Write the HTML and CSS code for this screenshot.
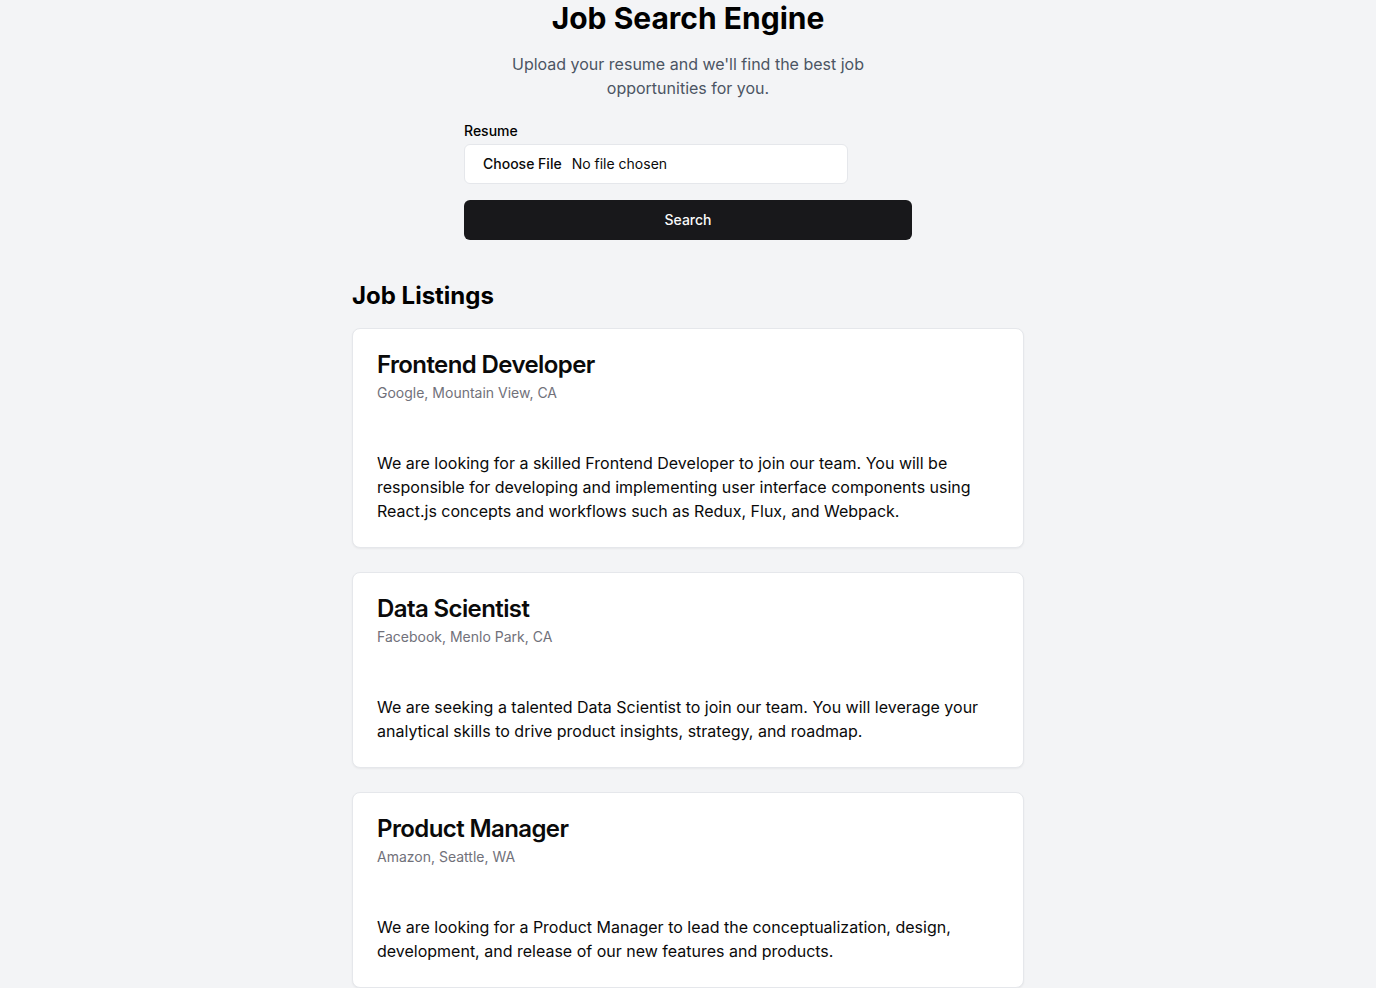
FILE: index.html
```html
<!DOCTYPE html>
<html lang="en">
<head>
<meta charset="utf-8">
<title>Job Search Engine</title>
<link rel="stylesheet" href="styles.css">
</head>
<body>
<main class="page">
  <section class="hero">
    <h1 class="title">Job Search Engine</h1>
    <p class="subtitle">Upload your resume and we'll find the best job opportunities for you.</p>
    <form class="search-form">
      <div class="field">
        <label class="label" for="resume">Resume</label>
        <input class="file-input" id="resume" type="file">
      </div>
      <button class="search-btn" type="button">Search</button>
    </form>
  </section>
  <section class="listings">
    <h2 class="listings-title">Job Listings</h2>
    <div class="cards">
      <article class="card">
        <header class="card-header">
          <h3 class="card-title">Frontend Developer</h3>
          <p class="card-desc">Google, Mountain View, CA</p>
        </header>
        <div class="card-content">
          <p>We are looking for a skilled Frontend Developer to join our team. You will be responsible for developing and implementing user interface components using React.js concepts and workflows such as Redux, Flux, and Webpack.</p>
        </div>
      </article>
      <article class="card">
        <header class="card-header">
          <h3 class="card-title">Data Scientist</h3>
          <p class="card-desc">Facebook, Menlo Park, CA</p>
        </header>
        <div class="card-content">
          <p>We are seeking a talented Data Scientist to join our team. You will leverage your analytical skills to drive product insights, strategy, and roadmap.</p>
        </div>
      </article>
      <article class="card">
        <header class="card-header">
          <h3 class="card-title">Product Manager</h3>
          <p class="card-desc">Amazon, Seattle, WA</p>
        </header>
        <div class="card-content">
          <p>We are looking for a Product Manager to lead the conceptualization, design, development, and release of our new features and products.</p>
        </div>
      </article>
    </div>
  </section>
</main>
</body>
</html>
```
FILE: styles.css
```css
* { box-sizing: border-box; }
html, body {
  margin: 0;
  padding: 0;
  background: #f3f4f6;
  font-family: Inter, "Noto Sans", "Liberation Sans", sans-serif;
  color: #0a0a0a;
}
.page {
  display: flex;
  flex-direction: column;
  align-items: center;
  padding-bottom: 40px;
}
.hero {
  display: flex;
  flex-direction: column;
  align-items: center;
  width: 448px;
}
.title {
  margin: 0;
  font-size: 30px;
  line-height: 36px;
  font-weight: 700;
  color: #000;
}
.subtitle {
  margin: 16px 0 0;
  max-width: 384px;
  text-align: center;
  font-size: 16px;
  line-height: 24px;
  color: #4b5563;
}
.search-form {
  width: 448px;
  margin-top: 20px;
  display: flex;
  flex-direction: column;
  gap: 16px;
}
.field {
  display: flex;
  flex-direction: column;
  gap: 3px;
}
.label {
  padding-top: 1px;
  font-size: 14px;
  line-height: 20px;
  font-weight: 500;
  color: #000;
}
.file-input {
  width: 384px;
  height: 40px;
  padding: 9px 12px 7px;
  border: 1px solid #e5e7eb;
  border-radius: 6px;
  background: #fff;
  font-family: inherit;
  font-size: 14px;
  color: #0a0a0a;
}
.file-input::file-selector-button {
  border: 0;
  background: transparent;
  font-family: inherit;
  font-size: 14px;
  font-weight: 500;
  color: #0a0a0a;
  padding: 1px 6px;
  margin-inline-end: 4px;
}
.search-btn {
  height: 40px;
  width: 100%;
  padding: 0 0 1px;
  border: 0;
  border-radius: 6px;
  background: #18181b;
  color: #fafafa;
  font-family: inherit;
  font-size: 14px;
  font-weight: 500;
}
.listings {
  width: 672px;
  margin-top: 40px;
}
.listings-title {
  margin: 0 0 16px;
  font-size: 24px;
  line-height: 32px;
  font-weight: 700;
  color: #000;
}
.cards {
  display: flex;
  flex-direction: column;
  gap: 24px;
}
.card {
  background: #fff;
  border: 1px solid #e5e7eb;
  border-radius: 8px;
  box-shadow: 0 1px 2px rgba(0,0,0,0.05);
}
.card-header {
  padding: 24px;
  display: flex;
  flex-direction: column;
  gap: 6px;
}
.card-title {
  margin: 0;
  font-size: 24px;
  line-height: 24px;
  font-weight: 600;
  letter-spacing: -0.6px;
  color: #0a0a0a;
}
.card-desc {
  margin: 0;
  font-size: 14px;
  line-height: 20px;
  color: #71717a;
}
.card-content {
  padding: 24px;
}
.card-content p {
  margin: 0;
  font-size: 16px;
  line-height: 24px;
  color: #0a0a0a;
}
```
